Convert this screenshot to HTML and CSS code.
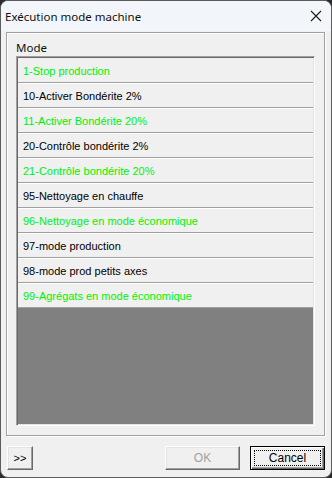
FILE: index.html
```html
<!DOCTYPE html>
<html lang="fr">
<head>
    <meta charset="UTF-8">
    <title>Exécution mode machine</title>
    <link rel="stylesheet" href="styles.css">
</head>
<body>
    <div class="window">
        <!-- Title bar -->
        <div class="titlebar">
            <span class="title">Exécution mode machine</span>
            <svg class="close" width="12" height="12" viewBox="0 0 12 12">
                <path d="M1 1L11 11M11 1L1 11" stroke="#1a1a1a" stroke-width="1.1" fill="none"/>
            </svg>
        </div>

        <div class="content">
            <!-- Mode group -->
            <div class="group">
                <div class="group-label">Mode</div>
                <div class="listbox">
                    <div class="row green">1-Stop production</div>
                    <div class="row">10-Activer Bondérite 2%</div>
                    <div class="row green">11-Activer Bondérite 20%</div>
                    <div class="row">20-Contrôle bondérite 2%</div>
                    <div class="row green">21-Contrôle bondérite 20%</div>
                    <div class="row">95-Nettoyage en chauffe</div>
                    <div class="row green">96-Nettoyage en mode économique</div>
                    <div class="row">97-mode production</div>
                    <div class="row">98-mode prod petits axes</div>
                    <div class="row green">99-Agrégats en mode économique</div>
                    <div class="filler"></div>
                </div>
            </div>

            <!-- Buttons -->
            <div class="buttons">
                <button class="btn btn-more">&gt;&gt;</button>
                <div class="spacer"></div>
                <button class="btn btn-ok" disabled>OK</button>
                <button class="btn btn-default"><span class="focus">Cancel</span></button>
            </div>
        </div>
    </div>
</body>
</html>
```

FILE: styles.css
```css
* {
    margin: 0;
    padding: 0;
    box-sizing: border-box;
}

body {
    background: #2b2b2b;
    width: 332px;
    height: 478px;
    overflow: hidden;
}

.window {
    width: 332px;
    height: 478px;
    display: flex;
    flex-direction: column;
    background: #f0f0f0;
    border: 1px solid #5c5c5c;
    border-radius: 8px;
    overflow: hidden;
}

/* Title bar */
.titlebar {
    height: 30px;
    display: flex;
    align-items: center;
    justify-content: space-between;
    padding: 0 8px 0 4px;
    background: #f2f5f9;
}

.title {
    font-family: "Noto Sans", sans-serif;
    font-size: 11.5px;
    color: #111;
}

.close {
    display: block;
    margin-right: 1px;
}

/* Content */
.content {
    flex: 1;
    display: flex;
    flex-direction: column;
    padding: 1px 6px 0 5px;
    font-family: "Liberation Sans", Arial, sans-serif;
    font-size: 11px;
}

.group {
    height: 404px;
    display: flex;
    flex-direction: column;
    border: 1px solid #a0a0a0;
    box-shadow: inset 1px 1px 0 #fff, 1px 1px 0 #fff;
    padding: 8px 9px 9px 9px;
}

.group-label {
    height: 15px;
    line-height: 14px;
    font-family: "Noto Sans", sans-serif;
    font-size: 11.5px;
    color: #111;
}

.listbox {
    flex: 1;
    display: flex;
    flex-direction: column;
    border: 1px solid;
    border-color: #a0a0a0 #fff #fff #a0a0a0;
    box-shadow: inset 1px 1px 0 #696969, inset -1px -1px 0 #e3e3e3;
    padding: 1px;
}

.row {
    height: 25px;
    flex: none;
    display: flex;
    align-items: center;
    padding: 1px 0 0 5px;
    background: #f0f0f0;
    border-top: 1px solid #fff;
    border-bottom: 1px solid #a0a0a0;
    color: #000;
}

.row:first-child {
    border-top-color: #f0f0f0;
}

.row.green {
    color: #00f000;
}

.filler {
    flex: 1;
    background: #808080;
}

/* Buttons */
.buttons {
    display: flex;
    gap: 10px;
    margin-top: 10px;
    padding-left: 1px;
}

.spacer {
    flex: 1;
}

.btn {
    height: 24px;
    width: 75px;
    font-family: "Liberation Sans", Arial, sans-serif;
    font-size: 11px;
    color: #000;
    background: #f0f0f0;
    border: 1px solid;
    border-color: #fff #696969 #696969 #fff;
    box-shadow: inset -1px -1px 0 #a0a0a0, inset 1px 1px 0 #e3e3e3;
    display: flex;
    align-items: center;
    justify-content: center;
}

.btn-more {
    width: 26px;
}

.btn-ok {
    color: #a0a0a0;
    font-size: 12px;
}

.btn-default {
    border: 1px solid #000;
    box-shadow: inset 1px 1px 0 #fff, inset -1px -1px 0 #696969, inset -2px -2px 0 #a0a0a0;
    padding: 3px;
}

.focus {
    flex: 1;
    align-self: stretch;
    display: flex;
    align-items: center;
    justify-content: center;
    border: 1px dotted #000;
    font-size: 12px;
}
```
